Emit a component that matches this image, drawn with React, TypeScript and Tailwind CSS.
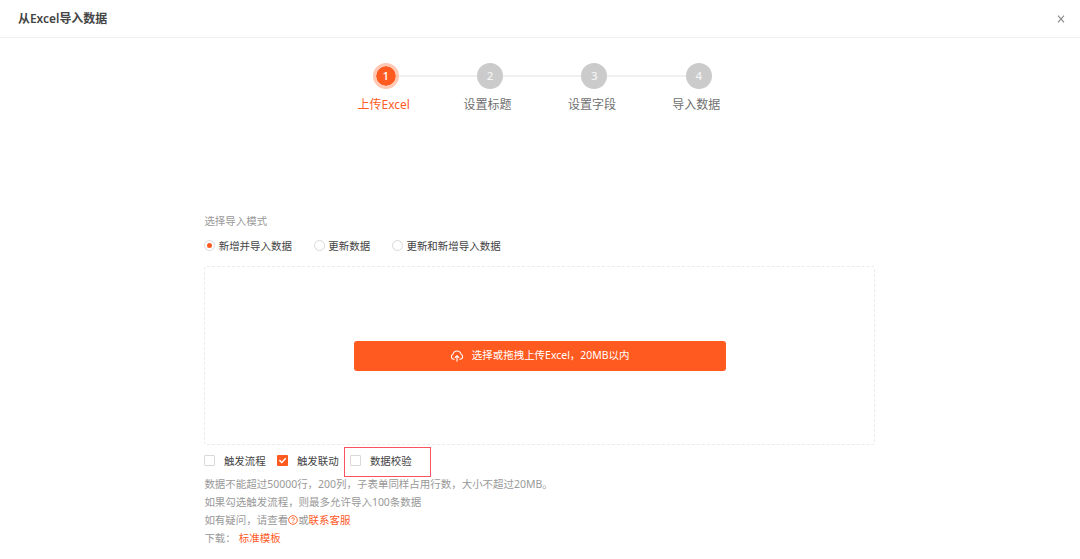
import { useState } from "react";

type Step = {
  id: number;
  label: string;
};

const STEPS: Step[] = [
  { id: 1, label: "上传Excel" },
  { id: 2, label: "设置标题" },
  { id: 3, label: "设置字段" },
  { id: 4, label: "导入数据" },
];

const MODES = [
  { id: "insert", label: "新增并导入数据" },
  { id: "update", label: "更新数据" },
  { id: "upsert", label: "更新和新增导入数据" },
];

function StepItem({ step, active, last }: { step: Step; active: boolean; last: boolean }) {
  return (
    <li className="relative flex w-[104.33px] flex-col items-center">
      {last ? null : (
        <span className="absolute top-3 left-[65px] h-[2px] w-[79px] bg-[#f0f0f0]" />
      )}
      <span
        className={
          active
            ? "flex size-[26px] items-center justify-center rounded-full border-3 border-[#ffc8b4] bg-[#ff5a1f] bg-clip-padding text-[11.5px] font-medium text-white"
            : "flex size-[26px] items-center justify-center rounded-full bg-[#cbcbcb] text-[11.5px] font-medium text-[#f4f4f4]"
        }
      >
        {step.id}
      </span>
      <span
        className={
          active
            ? "mt-[6px] mr-1 text-[12px] leading-5 text-[#ff5a1f]"
            : "mt-[6px] mr-[5px] text-[12px] leading-5 text-[#707070]"
        }
      >
        {step.label}
      </span>
    </li>
  );
}

function Checkbox({
  label,
  checked,
  onChange,
}: {
  label: string;
  checked: boolean;
  onChange: (value: boolean) => void;
}) {
  return (
    <label className="flex w-[73px] cursor-pointer items-center">
      <input
        type="checkbox"
        className="sr-only"
        checked={checked}
        onChange={(e) => onChange(e.target.checked)}
      />
      {checked ? (
        <span className="flex size-[11px] items-center justify-center rounded-[1px] bg-[#ff5a1f]">
          <svg viewBox="0 0 11 11" className="size-[11px]" fill="none" stroke="#fff" strokeWidth="1.5">
            <path d="M2.4 5.1 4.8 7.5 8.8 3.3" />
          </svg>
        </span>
      ) : (
        <span className="size-[11px] rounded-[1px] border border-[#d9d9d9] bg-white" />
      )}
      <span className="ml-[8.5px] pt-px whitespace-nowrap">{label}</span>
    </label>
  );
}

export default function App() {
  const [mode, setMode] = useState("insert");
  const [flow, setFlow] = useState(false);
  const [linkage, setLinkage] = useState(true);
  const [validate, setValidate] = useState(false);

  return (
    <div className="h-[559px] w-[1080px] overflow-hidden bg-white font-['Noto_Sans','Noto_Sans_CJK_SC',sans-serif] text-[10.47px] text-[#444]">
      <header className="flex h-[38px] items-center justify-between border-b border-[#efefef] pr-[15px] pl-[18px]">
        <h1 className="pt-px text-[11.95px] font-semibold text-[#444]">从Excel导入数据</h1>
        <button type="button" aria-label="关闭" className="text-[#888]">
          <svg viewBox="0 0 8 8" className="size-[8px]" fill="none" stroke="currentColor" strokeWidth="1.2">
            <path d="M1 .7 7 7.3M7 .7 1 7.3" />
          </svg>
        </button>
      </header>

      <ol className="ml-[333.6px] flex pt-[25px]">
        {STEPS.map((step, i) => (
          <StepItem key={step.id} step={step} active={i === 0} last={i === STEPS.length - 1} />
        ))}
      </ol>

      <main className="mt-[97px] ml-[204.4px] w-[670.6px]">
        <div className="leading-[18px] text-[#999]">选择导入模式</div>

        <div className="mt-[6px] flex h-[18px] items-center gap-[22px]">
          {MODES.map((m) => (
            <label key={m.id} className="flex cursor-pointer items-center">
              <input
                type="radio"
                name="mode"
                className="sr-only"
                checked={mode === m.id}
                onChange={() => setMode(m.id)}
              />
              <span className="flex size-[11px] items-center justify-center rounded-full border border-[#d9d9d9]">
                {mode === m.id ? <span className="size-[5px] rounded-full bg-[#ff5a1f]" /> : null}
              </span>
              <span className="ml-[3.3px] pt-px leading-[18px]">{m.label}</span>
            </label>
          ))}
        </div>

        <div className="mt-[12px] flex h-[179px] items-center justify-center rounded-[3px] border border-dashed border-[#ebebeb]">
          <button
            type="button"
            className="flex h-[30px] w-[372px] items-center justify-center rounded-[3px] bg-[#ff5a1f] text-white"
          >
            <svg
              viewBox="0 0 14 12"
              className="mr-2 h-[12px] w-[14px]"
              fill="none"
              stroke="currentColor"
              strokeWidth="1.1"
              strokeLinecap="round"
              strokeLinejoin="round"
            >
              <path d="M4.2 9.2H3.6A2.6 2.6 0 0 1 3 4.2a4.1 4.1 0 0 1 8 0 2.6 2.6 0 0 1-.6 5h-.6" />
              <path d="M7 11.2V5.8M5.2 7.5 7 5.7l1.8 1.8" />
            </svg>
            <span>选择或拖拽上传Excel，20MB以内</span>
          </button>
        </div>

        <div className="mt-[7px] flex h-[18px] items-center">
          <Checkbox label="触发流程" checked={flow} onChange={setFlow} />
          <Checkbox label="触发联动" checked={linkage} onChange={setLinkage} />
          <div className="relative">
            <Checkbox label="数据校验" checked={validate} onChange={setValidate} />
            <span className="pointer-events-none absolute -top-[6px] -left-[6px] h-[30px] w-[86.5px] border border-[#f8535f]" />
          </div>
        </div>

        <div className="mt-[5px] leading-[18px] text-[#999]">
          <p>数据不能超过50000行，200列，子表单同样占用行数，大小不超过20MB。</p>
          <p>如果勾选触发流程，则最多允许导入100条数据</p>
          <p className="flex items-center">
            如有疑问，请查看
            <svg viewBox="0 0 10 10" className="size-[10px]" fill="none" stroke="#ff5a1f" strokeWidth="0.9">
              <circle cx="5" cy="5" r="4.3" />
              <path d="M3.7 4.1a1.3 1.3 0 1 1 1.9 1.1c-.4.2-.6.4-.6.9M5 6.8v.9" />
            </svg>
            或<a className="cursor-pointer text-[#ff5a1f]">联系客服</a>
          </p>
          <p>
            下载：<a className="ml-[3px] cursor-pointer text-[#ff5a1f]">标准模板</a>
          </p>
        </div>
      </main>
    </div>
  );
}
